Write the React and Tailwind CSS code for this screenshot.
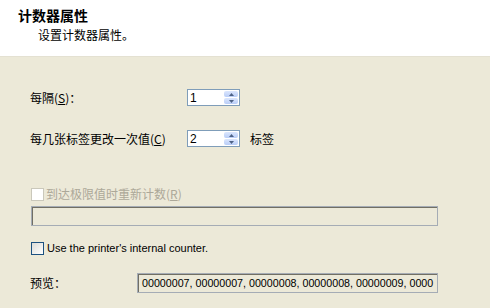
import React from 'react';

const cjk = { fontFamily: '"Noto Sans CJK SC", "Liberation Sans", sans-serif' };
const latin = { fontFamily: 'Tahoma, "Liberation Sans", "Noto Sans CJK SC", sans-serif' };

const Spinner = ({ value }) => (
  <div className="flex h-[17px] w-[53px] border border-[#7f9db9] bg-white">
    <div className="flex flex-1 items-center pl-[2px] text-[12px] leading-none text-black" style={latin}>
      {value}
    </div>
    <div className="flex w-[16px] flex-col gap-[1px] p-[1px]">
      <div className="flex flex-1 items-center justify-center rounded-[2px] bg-gradient-to-b from-[#dbe6fd] to-[#b9cdf7]">
        <svg width="5" height="3" viewBox="0 0 5 3"><path d="M2.5 0L5 3H0z" fill="#4d6185" /></svg>
      </div>
      <div className="flex flex-1 items-center justify-center rounded-[2px] bg-gradient-to-b from-[#dbe6fd] to-[#b9cdf7]">
        <svg width="5" height="3" viewBox="0 0 5 3"><path d="M0 0H5L2.5 3z" fill="#4d6185" /></svg>
      </div>
    </div>
  </div>
);

const Check = ({ disabled }) => (
  <div
    className={
      disabled
        ? 'h-[13px] w-[13px] border border-[#cac8bb] bg-white'
        : 'h-[13px] w-[13px] border border-[#1c5180] bg-gradient-to-br from-[#dcdcd7] to-[#ffffff]'
    }
  />
);

export default function App() {
  return (
    <div className="h-[308px] w-[490px] overflow-hidden bg-[#ece9d8]" style={cjk}>
      {/* Header */}
      <div className="h-[57px] border-b border-[#e4e1d2] bg-white pl-[18px] pt-[6px]">
        <div className="text-[14px] font-bold leading-[18px] text-black">计数器属性</div>
        <div className="mt-[3px] pl-[20px] text-[12px] leading-[16px] text-black">设置计数器属性。</div>
      </div>

      {/* Body */}
      <div className="flex flex-col px-[30px] text-[12px] text-black">
        <div className="mt-[32px] flex h-[17px] items-center">
          <div className="w-[157px]">
            每隔(<span className="underline">S</span>)：
          </div>
          <Spinner value="1" />
        </div>

        <div className="mt-[24px] flex h-[17px] items-center">
          <div className="w-[157px]">
            每几张标签更改一次值(<span className="underline">C</span>)
          </div>
          <Spinner value="2" />
          <div className="ml-[10px]">标签</div>
        </div>

        <div className="ml-[1px] mt-[39px] flex h-[16px] items-center gap-[2px] text-[#aca899]">
          <Check disabled />
          <span>
            到达极限值时重新计数(<span className="underline">R</span>)
          </span>
        </div>

        <div className="ml-[1px] mt-[4px] h-[20px] w-[407px] border border-[#a5acb5] bg-[#ece9d8]">
          <div className="h-full w-full border-l border-t border-[#716f64]" />
        </div>

        <div className="ml-[1px] mt-[14px] flex h-[16px] items-center gap-[3px]">
          <Check />
          <span className="text-[11px]" style={latin}>Use the printer's internal counter.</span>
        </div>

        <div className="mt-[17px] flex h-[20px] items-center">
          <div className="w-[107px]">预览：</div>
          <div className="h-[20px] w-[301px] overflow-hidden border border-[#a5acb5]">
            <div className="flex h-full items-center whitespace-nowrap border-l border-t border-[#716f64] pl-[3px] text-[10.7px]" style={latin}>
              00000007, 00000007, 00000008, 00000008, 00000009, 0000
            </div>
          </div>
        </div>
      </div>
    </div>
  );
}
